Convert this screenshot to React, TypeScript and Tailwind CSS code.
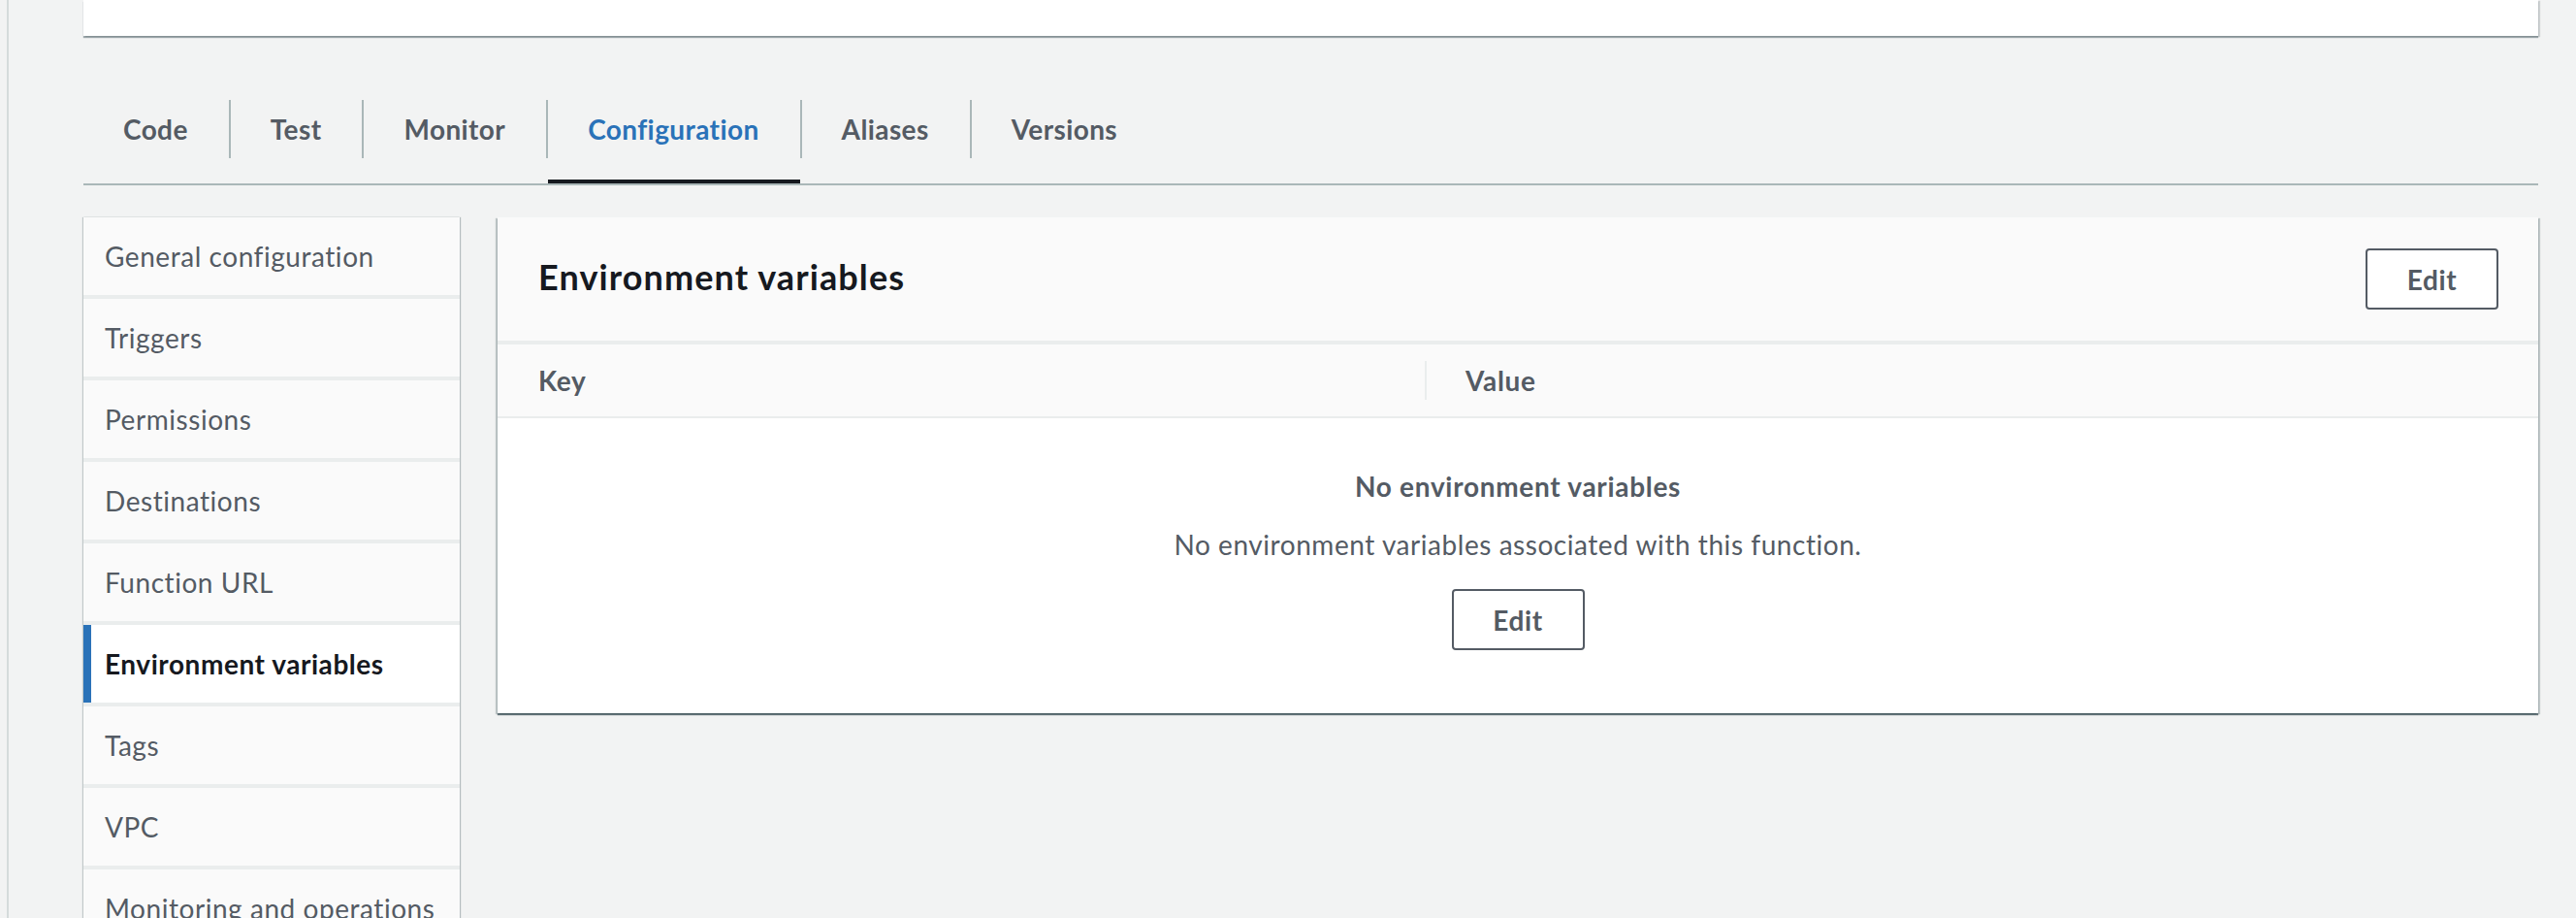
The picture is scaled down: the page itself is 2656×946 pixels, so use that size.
import { useState } from "react";

const TABS = ["Code", "Test", "Monitor", "Configuration", "Aliases", "Versions"];

const NAV_ITEMS = [
    "General configuration",
    "Triggers",
    "Permissions",
    "Destinations",
    "Function URL",
    "Environment variables",
    "Tags",
    "VPC",
    "Monitoring and operations tools",
];

const EditButton = () => (
    <button className="h-[63px] w-[137px] rounded-[4px] border-2 border-[#545b64] bg-white text-[28px] font-bold leading-[40px] tracking-[0.6px] text-[#545b64]">
        Edit
    </button>
);

const App = () => {
    const [activeTab, setActiveTab] = useState("Configuration");
    const [activeNav, setActiveNav] = useState("Environment variables");

    return (
        <div className="h-screen overflow-hidden bg-[#f2f3f3] pl-[7px] font-['Lato',sans-serif] tracking-[0.55px]">
            <div className="h-full border-l-2 border-[#d5dbdb] pl-[77px] pr-[39px]">
                {/* function overview card, cut off at the top */}
                <div className="h-[37px] bg-white shadow-[0_2px_1px_0_rgba(0,28,36,0.35),2px_1px_1px_0_rgba(0,28,36,0.15)]"></div>

                {/* tabs */}
                <div className="mt-[48px] flex border-b-2 border-[#aab7b8]">
                    {TABS.map((tab, i) => (
                        <button
                            key={tab}
                            onClick={() => setActiveTab(tab)}
                            className={`relative flex h-[104px] items-center pb-[8px] text-[28px] font-bold leading-[40px] tracking-[0.4px] ${
                                i === 0 ? "pl-[41px] pr-[42px]" : "pl-[43px] pr-[42px]"
                            } ${activeTab === tab ? "text-[#2a72b8]" : "text-[#545b64]"}`}
                        >
                            {i > 0 && (
                                <span className="absolute left-0 top-[18px] h-[60px] w-[2px] bg-[#aab7b8]"></span>
                            )}
                            {tab}
                            {activeTab === tab && (
                                <span className="absolute bottom-0 left-[2px] right-0 h-[4px] bg-[#16191f]"></span>
                            )}
                        </button>
                    ))}
                </div>

                <div className="mt-[33px] flex items-start gap-[39px]">
                    {/* left navigation */}
                    <div className="flex w-[388px] shrink-0 flex-col gap-[4px] bg-[#eaeded] shadow-[1px_0_1px_0_rgba(0,28,36,0.25),-1px_0_1px_0_rgba(0,28,36,0.2)]">
                        {NAV_ITEMS.map((item) => (
                            <div
                                key={item}
                                onClick={() => setActiveNav(item)}
                                className={`py-[20px] pr-[16px] text-[28px] leading-[40px] ${
                                    activeNav === item
                                        ? "border-l-[8px] border-[#2a72b8] bg-white pl-[14px] font-bold text-[#16191f]"
                                        : "bg-[#fafafa] pl-[22px] text-[#545b64]"
                                }`}
                            >
                                {item}
                            </div>
                        ))}
                    </div>

                    {/* environment variables panel */}
                    <div className="flex-1 bg-white shadow-[0_2px_1px_0_rgba(0,28,36,0.55),2px_1px_1px_0_rgba(0,28,36,0.2),-2px_1px_1px_0_rgba(0,28,36,0.2)]">
                        <div className="flex h-[127px] items-center justify-between bg-[#fafafa] px-[42px] pr-[41px]">
                            <h2 className="mb-[6px] text-[36px] font-bold leading-[44px] tracking-[1.1px] text-[#16191f]">
                                Environment variables
                            </h2>
                            <EditButton />
                        </div>
                        <div className="h-[4px] bg-[#eaeded]"></div>
                        <div className="flex h-[74px] items-center bg-[#fafafa] text-[28px] font-bold leading-[40px] tracking-[0.7px] text-[#545b64]">
                            <div className="w-[956px] pl-[42px]">Key</div>
                            <div className="h-[40px] w-[2px] bg-[#eaeded]"></div>
                            <div className="pl-[40px]">Value</div>
                        </div>
                        <div className="h-[2px] bg-[#eaeded]"></div>
                        <div className="flex flex-col items-center pb-[65px] pt-[50px] text-[28px] leading-[40px] text-[#545b64]">
                            <p className="font-bold tracking-[0.7px]">No environment variables</p>
                            <p className="mt-[20px]">
                                No environment variables associated with this function.
                            </p>
                            <div className="mt-[26px]">
                                <EditButton />
                            </div>
                        </div>
                    </div>
                </div>
            </div>
        </div>
    );
};

export default App;
